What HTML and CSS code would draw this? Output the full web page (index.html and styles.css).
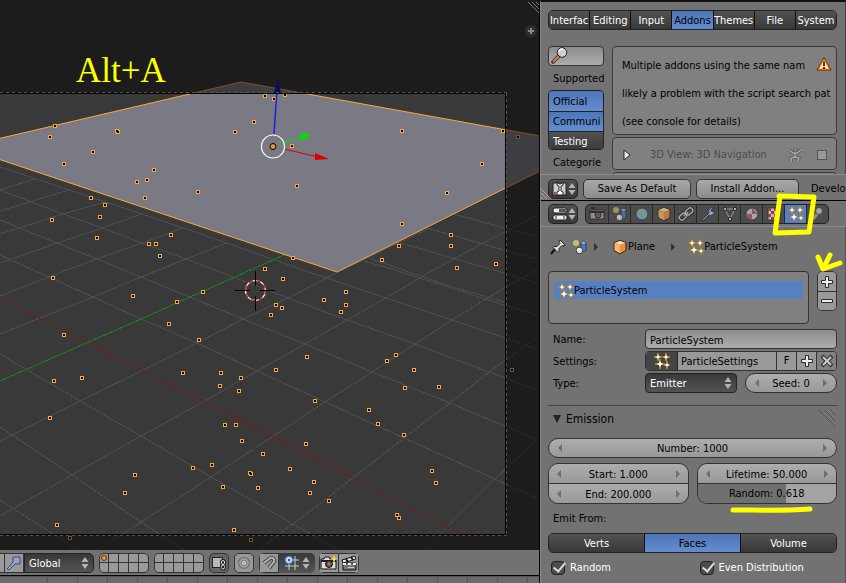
FILE: index.html
```
<!DOCTYPE html>
<html lang="en">
<head>
    <meta charset="UTF-8">
    <meta name="viewport" content="width=device-width, initial-scale=1.0">
    <title>Particle System</title>
    <link rel="stylesheet" href="styles.css">
</head>
<body>

<!-- Icons used in more than one place -->
<svg class="sprite" aria-hidden="true">
    <symbol id="i-particles" viewBox="0 0 16 16">
        <path d="M4 0v8M0 4h8M12 0v8M8.500 4H16M6 6v10M1 11h10M13 8v8M10 12h6" stroke="#5a3e08" stroke-width="2"/>
        <path d="M4 0v8M0 4h8M12 0v8M8.500 4H16M6 6v10M1 11h10M13 8v8M10 12h6" stroke="#f2b84b"/>
        <g fill="#fff">
            <path d="M4 1l.8 2.200L7 4l-2.200.8L4 7l-.8-2.200L1 4l2.200-.8zM12 1l.8 2.200L15 4l-2.200.8L12 7l-.8-2.200L9 4l2.200-.8zM6 7.500l1 2.500 2.500 1-2.500 1-1 2.500-1-2.500-2.500-1 2.500-1zM13 9.500l.7 1.800 1.800.7-1.800.7-.7 1.800-.7-1.800-1.800-.7 1.800-.7z"/>
        </g>
    </symbol>
    <symbol id="i-scene" viewBox="0 0 16 16">
        <circle cx="4" cy="4" r="3" fill="#d9d75c" opacity=".8"/>
        <path d="M9 4v7c0 2 5 2 5 0V4z" fill="#4a7cc0" stroke="#1c2c48" stroke-width=".7"/>
        <ellipse cx="11.500" cy="4" rx="2.500" ry="1.300" fill="#b5d0f0" stroke="#1c2c48" stroke-width=".6"/>
        <circle cx="7.500" cy="11.500" r="3.300" fill="#ddd" stroke="#222" stroke-width=".8"/>
        <circle cx="6.500" cy="10.500" r="1.200" fill="#fff"/>
    </symbol>
    <symbol id="i-cube" viewBox="0 0 16 16">
        <path d="M8 1.500l6 2v8l-6 3.500-6-3.500v-8z" fill="#e8913c" stroke="#3b220a"/>
        <path d="M8 2l5 1.700-5 2-5-2z" fill="#ffe0b8"/>
        <path d="M2.700 4.500L7.700 6.500v7.500l-5-3z" fill="#f6b97a"/>
    </symbol>
    <symbol id="i-updown" viewBox="0 0 8 14">
        <path d="M4 1l3.500 5h-7zM4 13l3.500-5h-7z" fill="#b4b4b4"/>
    </symbol>
    <symbol id="i-plus" viewBox="0 0 14 14">
        <path d="M5.500 1.500h3v4h4v3h-4v4h-3v-4h-4v-3h4z" fill="#eee" stroke="#2a2a2a"/>
    </symbol>
    <symbol id="i-left" viewBox="0 0 6 8"><path d="M5 0v8L1 4z" fill="#6d6d6d"/></symbol>
    <symbol id="i-right" viewBox="0 0 6 8"><path d="M1 0v8l4-4z" fill="#6d6d6d"/></symbol>
    <symbol id="i-grip" viewBox="0 0 18 18">
        <path d="M0 0l17 17M6 0l11 11M12 0l5 5" stroke="#4a4a4a"/>
        <path d="M1 0l17 17M7 0l11 11M13 0l5 5" stroke="#999" stroke-width=".5"/>
    </symbol>
</svg>

<div class="screen">
    <main class="left">
        <section class="viewport">
            <svg class="scene" viewBox="0 0 540 550" preserveAspectRatio="xMinYMin slice">
                <defs>
                    <path id="points" d="M55 126h0M50 137h0M118 132h0M117 131h0M93 152h0M64 164h0M154 170h0M137 182h0M147 180h0M145 198h0M198 192h0M235 132h0M254 122h0M265 96h0M91 198h0M105 205h0M100 217h0M97 238h0M52 220h0M171 235h0M149 244h0M156 244h0M160 256h0M53 278h0M265 269h0M274 99h0M285 95h0M292 146h0M297 186h0M402 131h0M503 131h0M518 137h0M482 164h0M447 193h0M402 224h0M399 246h0M382 260h0M451 235h0M451 246h0M457 268h0M496 264h0M293 258h0M283 279h0M133 296h0M203 292h0M177 302h0M169 324h0M64 335h0M199 340h0M183 373h0M221 373h0M241 378h0M220 386h0M239 391h0M82 378h0M54 381h0M50 418h0M225 425h0M236 425h0M242 441h0M263 454h0M193 468h0M212 465h0M250 473h0M251 474h0M135 475h0M125 493h0M223 487h0M258 488h0M57 525h0M234 530h0M346 292h0M324 300h0M346 305h0M341 312h0M276 305h0M282 308h0M271 315h0M307 357h0M276 370h0M396 355h0M387 361h0M414 370h0M405 388h0M439 387h0M315 401h0M369 410h0M378 424h0M404 435h0M306 444h0M290 469h0M314 482h0M310 493h0M329 501h0M432 471h0M436 483h0M397 515h0M399 518h0M512 370h0M70 538h0M251 540h0"/>
                </defs>
                <rect width="540" height="550" fill="#393939"/>

                <!-- floor grid -->
                <g class="grid">
                    <path d="M0 354L80 401 141 436 211 477 260 505 293 524 338 550"/>
                    <path d="M0 427L72 475 141 522 184 550"/>
                    <path d="M0 500L78 550"/>
                    <path d="M0 255L33 270 93 297 141 319 197 343 257 371 325 402 404 438 495 479 540 500"/>
                    <path d="M0 220L57 243 97 259 141 277 243 319 305 344 372 372 450 403 540 441"/>
                    <path d="M0 190L63 214 102 228 142 243 186 259 288 298 347 320 415 344 489 372 540 391"/>
                    <path d="M0 167L69 190 142 214 183 228 227 243 303 270 386 298 452 320 540 350"/>
                    <path d="M340 254L395 270 504 305 540 316"/>
                    <path d="M360 255L450 286 504 302"/>
                    <path d="M397 242L504 273 540 284"/>
                    <path d="M427 228L504 250 540 260"/>
                    <path d="M450 213L504 228 540 237"/>
                    <path d="M0 441L80 401 141 371 197 343 243 319 288 298 342 270 430 228"/>
                    <path d="M0 516L72 475 141 436 203 402 257 371 305 344 347 320 386 298 428 273 483 243 540 214"/>
                    <path d="M98 550L141 522 211 477 272 437 325 402 372 372 415 344 452 320 504 288 540 268"/>
                    <path d="M258 550L293 524 353 478 404 438 450 403 489 372 540 335"/>
                    <path d="M424 550L495 479 540 437"/>
                    <path d="M0 334L40 318 93 297 141 277 186 259 227 243"/>
                    <path d="M0 296L67 270 97 259 142 243 183 228"/>
                    <path d="M0 263L57 243 102 228 142 214"/>
                    <path d="M0 234L63 214 105 202"/>
                    <path d="M0 211L69 190M0 190L37 178"/>
                </g>
                <path class="axis-x" d="M0 298L270 435 460 533 494 550"/>
                <path class="axis-y" d="M0 381L141 319 284 255"/>

                <path class="plane" d="M-20 143L241 82 540 136 560 161 337 272-20 153z"/>

                <use href="#points" class="points"/>
                <use href="#points" class="cores"/>

                <!-- 3D manipulator -->
                <path d="M274 134L277 90" stroke="#2020e0" stroke-width="1.500"/>
                <path d="M274 93l4-14 3 14z" fill="#1818b0"/>
                <path d="M280 144L304 137" stroke="#0d0"/>
                <path d="M312 134l-10-1-3 4 4 3z" fill="#0d0"/>
                <path d="M284 149L318 157" stroke="#d00"/>
                <path d="M329 159l-14-6v7z" fill="#d00"/>
                <circle cx="273" cy="146.500" r="11.500" fill="none" stroke="#fff" stroke-width="1.200"/>
                <circle cx="273" cy="146.500" r="3" fill="#d89440" stroke="#000"/>

                <!-- 3D cursor -->
                <circle cx="255.500" cy="290.500" r="10" fill="none" stroke="#fff" stroke-width="1.200"/>
                <circle cx="255.500" cy="290.500" r="10" fill="none" stroke="#e00" stroke-width="1.200" stroke-dasharray="4 4"/>
                <path d="M235 290.500h15M260 290.500h15M255.500 271v15M255.500 296v15" stroke="#000"/>

                <!-- area outside of the camera -->
                <path d="M0 0h540v550H0V534h506V94H0z" fill="#000" opacity=".5"/>
                <path d="M0 93.500H505.500V534.500H0" class="frame"/>
                <path d="M0 92.500H507M506.500 93V535M0 535.500H507" class="frame-dash"/>
                <circle cx="531" cy="31" r="6" fill="#2e2e2e"/>
                <path d="M528 31h6M531 28v6" stroke="#888" stroke-width="2"/>
                <path d="M528 2l11 11M532 2l7 7M536 2l3 3" stroke="#777"/>
            </svg>
            <p class="hint">Alt+A</p>
        </section>

        <div class="view-header">
            <button class="cell stub" aria-label="Rotate"></button>
            <button class="cell" aria-label="Scale">
                <svg width="16" height="16" viewBox="0 0 16 16"><path d="M1 14L7 7V2h7v7H9l-6 6z" fill="#8ea6cc" stroke="#3a4a66"/></svg>
            </button>
            <div class="picker global">
                <select aria-label="Orientation"><option>Global</option></select>
                <svg width="8" height="14"><use href="#i-updown"/></svg>
            </div>
            <div class="layers">
                <button aria-label="Layer 1"><svg width="6" height="6"><circle cx="3" cy="3" r="2.500" fill="#f0953a" stroke="#5b3008"/></svg></button><button></button><button></button><button></button><button></button>
                <button></button><button></button><button></button><button></button><button></button>
            </div>
            <div class="layers">
                <button></button><button></button><button></button><button></button><button></button>
                <button></button><button></button><button></button><button></button><button></button>
            </div>
            <button class="cell round dim" aria-label="Lock to scene">
                <svg width="16" height="16" viewBox="0 0 16 16"><rect x="1.500" y="2.500" width="10" height="10" fill="#b8b8b8" stroke="#222"/><g fill="none" stroke="#222" stroke-width="3"><rect x="10.500" y="5.500" width="3" height="4" rx="1.500"/><rect x="10.500" y="10" width="3" height="4" rx="1.500"/></g><g fill="none" stroke="#ddd"><rect x="10.500" y="5.500" width="3" height="4" rx="1.500"/><rect x="10.500" y="10" width="3" height="4" rx="1.500"/></g></svg>
            </button>
            <button class="cell round" aria-label="Proportional editing">
                <svg width="16" height="16" viewBox="0 0 16 16"><circle cx="8" cy="8" r="5.500" fill="#aaa" stroke="#777" stroke-width="1.500"/><circle cx="8" cy="8" r="3" fill="#bbb" stroke="#777"/></svg>
            </button>
            <div class="joined">
                <button class="cell" aria-label="Snap">
                    <svg width="16" height="16" viewBox="0 0 16 16"><path d="M3 8l5-4c4-3 7 1 4 4l-4 5" fill="none" stroke="#444" stroke-width="4"/><path d="M3 8l5-4c4-3 7 1 4 4l-4 5" fill="none" stroke="#b4b4b4" stroke-width="2"/></svg>
                </button>
                <button class="snap" aria-label="Snap element">
                    <svg width="16" height="16" viewBox="0 0 16 16"><path d="M5 1v14M11 1v14M1 5h14M1 11h14" stroke="#ccc"/><circle cx="5" cy="5" r="3.500" fill="#fff" stroke="#4a86dd" stroke-width="1.500"/><circle cx="5" cy="5" r="1.500" fill="#2460b8"/></svg>
                    <svg width="8" height="14"><use href="#i-updown"/></svg>
                </button>
            </div>
            <div class="joined">
                <button class="cell" aria-label="Render image">
                    <svg width="18" height="16" viewBox="0 0 18 16"><path d="M1 4h3l1-2h4l1 2h6v10H1z" fill="#ddd" stroke="#111"/><path d="M1 6h15" stroke="#222" stroke-width="2"/><circle cx="9" cy="9" r="3.500" fill="#555" stroke="#111"/><circle cx="9" cy="9" r="1.500" fill="#c65"/><path d="M14 0l1 3 3 1-3 1-1 3-1-3-3-1 3-1z" fill="#ffdf3c"/></svg>
                </button>
                <button class="cell" aria-label="Render animation">
                    <svg width="18" height="16" viewBox="0 0 18 16"><path d="M3 8h13v7H3z" fill="#777" stroke="#111"/><path d="M2 5l13-4 1 3L3 8z" fill="#eee" stroke="#111"/><path d="M6 4l2 3M11 2l2 3" stroke="#111" stroke-width="2"/><path d="M3 9h13" stroke="#eee" stroke-width="2" stroke-dasharray="3 2"/><path d="M8 12.500h6" stroke="#ccc"/></svg>
                </button>
            </div>
        </div>
        <div class="timeline"></div>
    </main>

    <aside class="right">
        <section class="prefs">
            <div class="prefs-body">
                <nav class="tabs">
                    <button>Interfac</button><button>Editing</button><button>Input</button><button class="active">Addons</button><button>Themes</button><button>File</button><button>System</button>
                </nav>
                <div class="addons">
                    <div class="filters">
                        <div class="search">
                            <input type="text" aria-label="Search addons">
                            <svg width="18" height="18" viewBox="0 0 18 18"><path d="M2 16l6-6" stroke="#4c2410" stroke-width="3.500" stroke-linecap="round"/><path d="M2.500 15.500l5-5" stroke="#d08858" stroke-width="2" stroke-linecap="round"/><circle cx="11" cy="6.500" r="4.800" fill="#ddd" fill-opacity=".8" stroke="#222"/><path d="M8 6c0-2 2-3 4-3" stroke="#fff" fill="none" stroke-width="1.500"/></svg>
                        </div>
                        <p>Supported</p>
                        <div class="stack">
                            <button class="active">Official</button>
                            <button class="active">Communi</button>
                            <button>Testing</button>
                        </div>
                        <p>Categorie</p>
                    </div>
                    <div class="results">
                        <div class="box warning">
                            <p>Multiple addons using the same nam</p>
                            <p>likely a problem with the script search pat</p>
                            <p>(see console for details)</p>
                            <svg class="alert" width="16" height="16" viewBox="0 0 16 16"><path d="M8 1.500L15 14H1z" fill="#f49a38" stroke="#8a1f08" stroke-linejoin="round"/><path d="M8 4l4.500 8.500h-9z" fill="#ffe49a"/><path d="M8 5.500v4.500M8 11v2" stroke="#000" stroke-width="1.500"/></svg>
                        </div>
                        <div class="box addon">
                            <svg width="8" height="12" viewBox="0 0 8 12"><path d="M1 1l6 5-6 5z" fill="#eee" stroke="#222"/></svg>
                            <label for="nav">3D View: 3D Navigation</label>
                            <svg width="16" height="16" viewBox="0 0 16 16"><path d="M2 3l4 3h4l4-3M8 6v4M8 10l-4 1v4M8 10l4 1-1 3" fill="none" stroke="#555" stroke-width="3"/><path d="M2 3l4 3h4l4-3M8 6v4M8 10l-4 1v4M8 10l4 1-1 3" fill="none" stroke="#aaa" stroke-width="1.500"/><circle cx="8.500" cy="3" r="1.500" fill="#aaa" stroke="#555"/></svg>
                            <input type="checkbox" id="nav" disabled>
                        </div>
                        <div class="box"></div>
                    </div>
                </div>
            </div>
            <footer class="prefs-footer">
                <button class="editor" aria-label="Editor type">
                    <svg width="16" height="16" viewBox="0 0 16 16"><rect x="1" y="2" width="13" height="12" fill="#ccc" stroke="#222"/><path d="M5 1v3l2 1v5l-2 1v3h6v-3l-2-1V5l2-1V1L9 3H7z" fill="#fff" stroke="#222"/><path d="M2 12h2" stroke="#d33" stroke-width="2"/></svg>
                    <svg width="8" height="14"><use href="#i-updown"/></svg>
                </button>
                <button class="btn save">Save As Default</button>
                <button class="btn install">Install Addon...</button>
                <span>Develo</span>
            </footer>
        </section>

        <section class="props">
            <header class="props-header">
                <button class="editor" aria-label="Editor type">
                    <svg width="16" height="16" viewBox="0 0 16 16"><rect x="1" y="2" width="14" height="5" rx="2" fill="#eee" stroke="#222"/><rect x="7" y="3" width="7" height="3" fill="#555"/><rect x="1" y="9" width="14" height="5" rx="2" fill="#eee" stroke="#222"/><path d="M4 10v3M12 10v3" stroke="#222"/></svg>
                    <svg width="8" height="14"><use href="#i-updown"/></svg>
                </button>
                <nav class="contexts">
                    <button aria-label="Render"><svg width="16" height="16" viewBox="0 0 16 16"><path d="M1 4h14v9H1z" fill="#aaa" stroke="#222"/><path d="M2 2h4M1 6h14" stroke="#222" stroke-width="2"/><circle cx="9" cy="9" r="3" fill="#855" stroke="#222"/></svg></button>
                    <button aria-label="Scene"><svg width="16" height="16"><use href="#i-scene"/></svg></button>
                    <button aria-label="World"><svg width="16" height="16" viewBox="0 0 16 16"><circle cx="8" cy="8" r="6" fill="#7fb0de" stroke="#27405a"/><path d="M4 4l4-1 1 3-3 3-3-2zM9 8l4 0-2 4-2-1z" fill="#9cb86a"/></svg></button>
                    <button aria-label="Object"><svg width="16" height="16"><use href="#i-cube"/></svg></button>
                    <button aria-label="Constraints"><svg width="16" height="16" viewBox="0 0 16 16"><g fill="none" transform="rotate(-40 8 8)"><g stroke="#222" stroke-width="3.500"><rect x="0" y="5.500" width="8" height="5" rx="2.500"/><rect x="8" y="5.500" width="8" height="5" rx="2.500"/></g><g stroke="#ccc" stroke-width="1.500"><rect x="0" y="5.500" width="8" height="5" rx="2.500"/><rect x="8" y="5.500" width="8" height="5" rx="2.500"/><path d="M5 8h6"/></g></g></svg></button>
                    <button aria-label="Modifiers"><svg width="16" height="16" viewBox="0 0 16 16"><path d="M2 14l7-7c-1-3 1-6 4-5l-2 2 1 2 2-1c1 3-2 5-5 4l-6 6z" fill="#b9d0f4" stroke="#26364f"/></svg></button>
                    <button aria-label="Data"><svg width="16" height="16" viewBox="0 0 16 16"><path d="M3 3h10L8 13z" fill="none" stroke="#bbb"/><path d="M1.500 1.500h3v3h-3zM11.500 1.500h3v3h-3zM6.500 11.500h3v3h-3z" fill="#ddd" stroke="#222"/></svg></button>
                    <button aria-label="Material"><svg width="16" height="16" viewBox="0 0 16 16"><circle cx="8" cy="8" r="6" fill="#e0c4c4" stroke="#333"/><path d="M8 2v6H2a6 6 0 0 0 6 6V8h6" fill="#9d6565"/></svg></button>
                    <button aria-label="Texture"><svg width="16" height="16" viewBox="0 0 16 16"><path d="M2 2h12v12H2z" fill="#eee" stroke="#333"/><path d="M2 2h3v3H2zM8 2h3v3H8zM5 5h3v3H5zM11 5h3v3h-3zM2 8h3v3H2zM8 8h3v3H8zM5 11h3v3H5zM11 11h3v3h-3z" fill="#b03c3c"/></svg></button>
                    <button class="active" aria-label="Particles"><svg width="16" height="16"><use href="#i-particles"/></svg></button>
                    <button aria-label="Physics"><svg width="16" height="16" viewBox="0 0 16 16"><path d="M3 13l6-7" stroke="#aaa" stroke-width="3"/><circle cx="9" cy="5" r="3.500" fill="#ccc" stroke="#444"/></svg></button>
                </nav>
            </header>

            <div class="props-body">
                <div class="path">
                    <svg class="pin" width="16" height="16" viewBox="0 0 16 16"><path d="M1 15l5-6" stroke="#111" stroke-width="2"/><path d="M10 1l5 5-2 1-1-.5-3 3v3l-1 1-5-5 1-1h3l3-3-1-1z" fill="#ddd" stroke="#222"/></svg>
                    <svg width="16" height="16"><use href="#i-scene"/></svg>
                    <svg class="sep" width="6" height="8"><path d="M1 0v8l4-4z" fill="#333"/></svg>
                    <svg width="16" height="16"><use href="#i-cube"/></svg>
                    <span>Plane</span>
                    <svg class="sep wide" width="6" height="8"><path d="M1 0v8l4-4z" fill="#333"/></svg>
                    <svg width="16" height="16"><use href="#i-particles"/></svg>
                    <span>ParticleSystem</span>
                </div>

                <div class="slots">
                    <ul>
                        <li><svg width="16" height="16"><use href="#i-particles"/></svg>ParticleSystem</li>
                    </ul>
                    <div class="slot-buttons">
                        <button aria-label="Add"><svg width="14" height="14"><use href="#i-plus"/></svg></button>
                        <button aria-label="Remove"><svg width="14" height="14" viewBox="0 0 14 14"><path d="M1.500 5.500h11v3h-11z" fill="#eee" stroke="#2a2a2a"/></svg></button>
                    </div>
                </div>

                <div class="fields">
                    <label for="name">Name:</label>
                    <input type="text" id="name" class="text" value="ParticleSystem">

                    <label for="settings">Settings:</label>
                    <div class="datablock">
                        <button class="browse" aria-label="Browse"><svg width="16" height="16"><use href="#i-particles"/></svg></button>
                        <input type="text" id="settings" value="ParticleSettings">
                        <button class="small" aria-label="Fake user">F</button>
                        <button class="small" aria-label="New"><svg width="14" height="14"><use href="#i-plus"/></svg></button>
                        <button class="small faded" aria-label="Unlink"><svg width="14" height="14" viewBox="0 0 14 14"><path d="M2 2l10 10M12 2L2 12" stroke="#333" stroke-width="4"/><path d="M3 3l8 8M11 3l-8 8" stroke="#ccc" stroke-width="2"/></svg></button>
                    </div>

                    <label for="type">Type:</label>
                    <div class="type-row">
                        <div class="picker">
                            <select id="type"><option>Emitter</option></select>
                            <svg width="8" height="14"><use href="#i-updown"/></svg>
                        </div>
                        <div class="num">
                            <svg width="6" height="8"><use href="#i-left"/></svg>
                            <input type="text" aria-label="Seed" value="Seed: 0">
                            <svg width="6" height="8"><use href="#i-right"/></svg>
                        </div>
                    </div>
                </div>

                <div class="panel">
                    <h2><svg width="10" height="10" viewBox="0 0 10 10"><path d="M1 1h8L5 9z" fill="#222"/></svg>Emission<svg class="grip" width="18" height="18"><use href="#i-grip"/></svg></h2>

                    <div class="num">
                        <svg width="6" height="8"><use href="#i-left"/></svg>
                        <input type="text" aria-label="Number" value="Number: 1000">
                        <svg width="6" height="8"><use href="#i-right"/></svg>
                    </div>

                    <div class="pair">
                        <div class="group">
                            <div class="num">
                                <svg width="6" height="8"><use href="#i-left"/></svg>
                                <input type="text" aria-label="Start" value="Start: 1.000">
                                <svg width="6" height="8"><use href="#i-right"/></svg>
                            </div>
                            <div class="num">
                                <svg width="6" height="8"><use href="#i-left"/></svg>
                                <input type="text" aria-label="End" value="End: 200.000">
                                <svg width="6" height="8"><use href="#i-right"/></svg>
                            </div>
                        </div>
                        <div class="group">
                            <div class="num">
                                <svg width="6" height="8"><use href="#i-left"/></svg>
                                <input type="text" aria-label="Lifetime" value="Lifetime: 50.000">
                                <svg width="6" height="8"><use href="#i-right"/></svg>
                            </div>
                            <div class="num slider" style="--value: 64%">
                                <input type="range" id="rand" min="0" max="1" step="0.001" value="0.618">
                                <label for="rand">Random: 0.618</label>
                            </div>
                        </div>
                    </div>

                    <p class="caption">Emit From:</p>
                    <div class="tabs">
                        <button>Verts</button><button class="active">Faces</button><button>Volume</button>
                    </div>
                    <div class="pair checks">
                        <label><input type="checkbox" checked>Random</label>
                        <label><input type="checkbox" checked>Even Distribution</label>
                    </div>
                </div>
            </div>
        </section>

        <!-- hand drawn marks -->
        <svg class="marks" width="306" height="583" viewBox="0 0 306 583">
            <path d="M0 188l11 11M0 192l7 7M0 196l3 3" stroke="#aaa" stroke-width="1"/>
            <path d="M239 196l35 1-5 35-34 1 5-37"/>
            <path d="M193 510c25 0 50 1 77-1"/>
            <path d="M278 257l5 12 7-14M283 269l17-6"/>
        </svg>
    </aside>
</div>

</body>
</html>
```
FILE: styles.css
```
* {
    box-sizing: border-box;
}
body {
    margin: 0;
    background: #727272;
    overflow: hidden;
    color: #000;
    font-family: "DejaVu Sans Condensed", "DejaVu Sans", sans-serif;
    font-size: 11px;
    line-height: 14px;
}
p, h2, ul {
    margin: 0;
    padding: 0;
    font-size: 11px;
    font-weight: normal;
}
button, input, select {
    margin: 0;
    padding: 0;
    border: 0;
    background: none;
    color: inherit;
    font: inherit;
}
svg {
    flex: none;
    display: block;
}
.sprite {
    position: absolute;
    width: 0;
    height: 0;
}
.screen {
    display: grid;
    grid-template-columns: minmax(0, 1fr) 306px;
    height: 100vh;
}

/* 3D view */
.left {
    display: flex;
    flex-direction: column;
    min-height: 0;
    border-right: 1px solid #000;
}
.viewport {
    position: relative;
    flex: 1;
    min-height: 0;
    overflow: hidden;
    border-top: 2px solid #000;
    margin-top: -2px;
}
.scene {
    width: 100%;
    height: 100%;
}
.grid {
    fill: none;
    stroke: #4c4c4c;
    shape-rendering: crispEdges;
}
.axis-x {
    fill: none;
    stroke: #6c2020;
    shape-rendering: crispEdges;
}
.axis-y {
    fill: none;
    stroke: #1b801b;
    shape-rendering: crispEdges;
}
.plane {
    fill: #7a7a84;
    stroke: #ffa435;
}
.points {
    stroke: #ffa435;
    stroke-width: 4;
    stroke-linecap: square;
}
.cores {
    stroke: #000;
    stroke-width: 2;
    stroke-linecap: square;
}
.frame {
    fill: none;
    stroke: #000;
}
.frame-dash {
    fill: none;
    stroke: #555;
    stroke-dasharray: 3 3;
}
.hint {
    position: absolute;
    left: 76px;
    top: 51px;
    color: #ff0;
    font-family: "Liberation Serif", serif;
    font-size: 35px;
    line-height: 40px;
}

.view-header {
    display: flex;
    height: 26px;
    padding-top: 3px;
    background: #727272;
    border-bottom: 1px solid #000;
}
.cell {
    display: flex;
    align-items: center;
    justify-content: center;
    flex: none;
    width: 20px;
    height: 20px;
    background: #999;
    border: 1px solid #333;
}
.cell.stub {
    width: 4px;
    border-left: 0;
    border-right: 0;
}
.cell.round {
    margin-right: 5px;
    border-radius: 5px;
}
.cell.dim {
    background: #666;
}
.picker {
    position: relative;
    flex: none;
}
.picker select {
    appearance: none;
    width: 100%;
    height: 20px;
    padding: 2px 0 0 4px;
    background: linear-gradient(#383838, #545454);
    border: 1px solid #222;
    border-radius: 4px;
    color: #fff;
}
.picker svg {
    position: absolute;
    right: 5px;
    top: 3px;
    pointer-events: none;
}
.picker.global {
    width: 70px;
    margin-right: 5px;
}
.global select {
    border-radius: 0 5px 5px 0;
}
.layers {
    display: grid;
    grid-template-columns: repeat(5, 10px);
    grid-template-rows: 10px 10px;
    flex: none;
    height: 20px;
    margin-right: 5px;
    overflow: hidden;
    border-radius: 5px;
    background: #999;
    box-shadow: inset 0 0 0 1px #333;
}
.layers button {
    padding: 2px;
    border-right: 1px solid #333;
    border-bottom: 1px solid #333;
}
.joined {
    display: flex;
    flex: none;
    margin-right: 4px;
    overflow: hidden;
    height: 20px;
    border-radius: 5px;
}
.joined .cell + .cell {
    border-left: 0;
}
.snap {
    display: flex;
    align-items: center;
    justify-content: space-between;
    width: 36px;
    padding: 0 5px;
    background: linear-gradient(#383838, #545454);
}
.timeline {
    height: 7px;
    background: repeating-linear-gradient(90deg, #6b6b6b 0 29px, #585858 29px 30px) 18px 0;
    border-top: 1px solid #555;
}

/* right column */
.right {
    position: relative;
    display: flex;
    flex-direction: column;
    min-height: 0;
    overflow: hidden;
    border-top: 2px solid #111;
    border-left: 1px solid #888;
}
.prefs {
    flex: none;
    border-bottom: 1px solid #000;
}
.prefs-body {
    height: 172px;
    padding: 8px 8px 0 7px;
    overflow: hidden;
    border-right: 1px solid #444;
}
.tabs {
    display: flex;
    height: 20px;
    overflow: hidden;
    border: 1px solid #222;
    border-radius: 5px;
}
.tabs button {
    flex: 1 1 0;
    min-width: 0;
    padding-top: 2px;
    overflow: hidden;
    white-space: nowrap;
    background: linear-gradient(#525252, #383838);
    color: #fff;
}
.tabs button + button {
    border-left: 1px solid #111;
}
.tabs .active, .stack .active {
    background: linear-gradient(#4d76b8, #648dd0);
    color: #000;
}
.addons {
    display: grid;
    grid-template-columns: 56px minmax(0, 1fr);
    gap: 8px;
    margin-top: 16px;
}
.filters p {
    padding: 6px 0 4px 5px;
}
.search {
    position: relative;
}
.search input {
    display: block;
    width: 100%;
    height: 20px;
    background: linear-gradient(#8d8d8d, #adadad);
    border: 1px solid #333;
    border-radius: 4px;
}
.search svg {
    position: absolute;
    left: 3px;
    top: 0;
}
.stack {
    height: 60px;
    overflow: hidden;
    border: 1px solid #222;
    border-radius: 4px;
}
.stack button {
    display: block;
    width: 100%;
    height: 20px;
    padding: 1px 0 0 4px;
    text-align: left;
    background: linear-gradient(#525252, #383838);
    color: #fff;
}
.stack button + button {
    border-top: 1px solid #222;
}
.results {
    display: grid;
    gap: 2px;
}
.box {
    height: 33px;
    background: #808080;
    border: 1px solid #3a3a3a;
    border-radius: 4px;
}
.box.warning {
    position: relative;
    height: 89px;
    padding: 5px 0 0 9px;
    overflow: hidden;
    white-space: nowrap;
}
.warning p {
    line-height: 28px;
}
.alert {
    position: absolute;
    right: 4px;
    top: 9px;
}
.box.addon {
    display: flex;
    align-items: center;
    padding: 2px 9px 0 10px;
    color: #4c4c4c;
}
.addon label {
    flex: 1;
    padding-left: 19px;
}
.addon input {
    appearance: none;
    width: 10px;
    height: 10px;
    margin-left: 14px;
    background: #999;
    border: 1px solid #555;
}
.prefs-footer {
    display: flex;
    align-items: center;
    height: 26px;
    padding: 2px 0 0 7px;
    border-top: 1px solid #8c8c8c;
    white-space: nowrap;
}
.editor {
    display: flex;
    align-items: center;
    justify-content: space-between;
    flex: none;
    width: 30px;
    height: 20px;
    padding: 0 2px 0 3px;
    background: linear-gradient(#525252, #383838);
    border: 1px solid #222;
    border-radius: 5px;
}
.btn {
    flex: none;
    height: 20px;
    margin-left: 5px;
    padding-top: 1px;
    background: linear-gradient(#a8a8a8, #8c8c8c);
    border: 1px solid #333;
    border-radius: 5px;
}
.save {
    width: 108px;
}
.install {
    width: 103px;
}
.prefs-footer span {
    margin-left: 12px;
}

/* properties */
.props-header {
    display: flex;
    height: 26px;
    padding: 3px 7px;
    border-bottom: 1px solid #8c8c8c;
}
.contexts {
    display: flex;
    margin-left: 7px;
    height: 20px;
    overflow: hidden;
    background: #4c4c4c;
    border: 1px solid #222;
    border-radius: 5px;
}
.contexts button {
    display: flex;
    align-items: center;
    justify-content: center;
    width: 22px;
}
.contexts button:not(.active) svg {
    opacity: .7;
}
.contexts button + button {
    border-left: 1px solid #2a2a2a;
}
.contexts .active {
    background: #5680c2;
}
.props-body {
    padding: 10px 8px 10px 7px;
    border-right: 1px solid #555;
}
.path {
    display: flex;
    align-items: center;
    height: 20px;
}
.path .pin {
    margin: 0 6px 0 2px;
}
.sep {
    margin: 0 13px 0 5px;
}
.sep.wide {
    margin: 0 12px 0 15px;
}
.slots {
    display: flex;
    gap: 8px;
    margin-top: 14px;
}
.slots ul {
    flex: 1;
    height: 53px;
    padding: 9px 5px;
    list-style: none;
    background: #808080;
    border: 1px solid #333;
    border-radius: 4px;
}
.slots li {
    display: flex;
    align-items: center;
    height: 18px;
    padding: 1px 0 0 4px;
    background: #5680c2;
    border-radius: 2px;
}
.slot-buttons {
    width: 20px;
    height: 40px;
    overflow: hidden;
    border: 1px solid #333;
    border-radius: 5px;
}
.slot-buttons button {
    display: flex;
    align-items: center;
    justify-content: center;
    width: 100%;
    height: 19px;
    background: #999;
}
.slot-buttons button + button {
    border-top: 1px solid #333;
}
.fields {
    display: grid;
    grid-template-columns: 97px minmax(0, 1fr);
    row-gap: 2px;
    margin-top: 5px;
    align-items: center;
}
.fields > label, .caption {
    padding: 2px 0 0 5px;
}
.text {
    height: 20px;
    padding: 2px 4px 0;
    background: linear-gradient(#8d8d8d, #adadad);
    border: 1px solid #333;
    border-radius: 4px;
}
.datablock {
    display: flex;
    height: 20px;
    overflow: hidden;
    background: #999;
    border: 1px solid #333;
    border-radius: 4px;
}
.datablock input {
    flex: 1;
    min-width: 0;
    padding: 2px 0 0 3px;
    border-left: 1px solid #222;
}
.datablock button {
    display: flex;
    align-items: center;
    justify-content: center;
}
.browse {
    width: 31px;
    background: #444;
}
.small {
    width: 20px;
}
.datablock .small {
    border-left: 1px solid #333;
}
.datablock .faded {
    background: #808080;
}
.type-row {
    display: grid;
    grid-template-columns: minmax(0, 1fr) minmax(0, 1fr);
    gap: 8px;
}
.num {
    display: flex;
    align-items: center;
    justify-content: space-between;
    height: 20px;
    padding: 0 8px;
    background: linear-gradient(#adadad, #999);
    border: 1px solid #333;
    border-radius: 10px;
}
.num input {
    flex: 1;
    min-width: 0;
    padding-top: 2px;
    text-align: center;
}
.panel {
    margin-top: 12px;
    border-top: 1px solid #444;
}
.panel h2 {
    display: flex;
    align-items: center;
    gap: 4px;
    height: 26px;
    margin-bottom: 6px;
    padding-left: 4px;
    font-size: 12px;
}
.grip {
    margin-left: auto;
}
.pair {
    display: grid;
    grid-template-columns: minmax(0, 1fr) minmax(0, 1fr);
    gap: 8px;
    margin-top: 5px;
}
.group {
    overflow: hidden;
    height: 41px;
    border: 1px solid #333;
    border-radius: 10px;
}
.group .num {
    height: 19px;
    padding: 0 7px;
    border: 0;
    border-radius: 0;
}
.group .num + .num {
    height: 20px;
    border-top: 1px solid #333;
}
.group .slider {
    position: relative;
    padding: 0;
    background: linear-gradient(90deg, #707070 var(--value), #a4a4a4 var(--value));
}
.slider input {
    appearance: none;
    height: 100%;
    opacity: 0;
}
.slider label {
    position: absolute;
    inset: 3px 0 0 0;
    text-align: center;
    pointer-events: none;
}
.caption {
    margin: 6px 0 7px;
}
.checks {
    margin-top: 8px;
    color: #fff;
}
.checks label {
    display: flex;
    align-items: center;
    gap: 5px;
    padding-left: 3px;
}
.checks input {
    appearance: none;
    position: relative;
    width: 14px;
    height: 14px;
    background: #4c4c4c;
    border: 1px solid #222;
    border-radius: 4px;
}
.checks input:checked::before {
    content: "";
    position: absolute;
    left: 4px;
    top: -2px;
    width: 5px;
    height: 10px;
    border: solid #ddd;
    border-width: 0 2px 2px 0;
    transform: rotate(40deg);
}
.marks {
    position: absolute;
    left: -1px;
    top: -2px;
    fill: none;
    stroke: #ff0;
    stroke-width: 5;
    stroke-linecap: round;
    stroke-linejoin: round;
    pointer-events: none;
}
```
